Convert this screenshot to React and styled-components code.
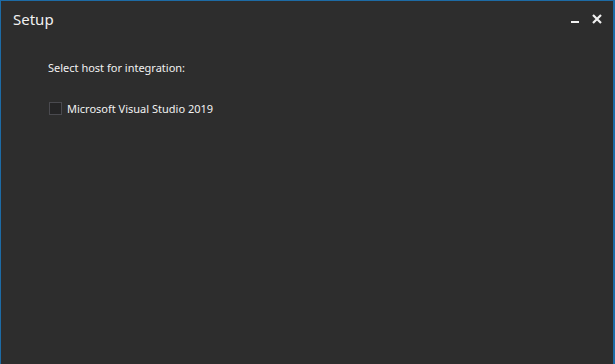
import React from "react";
import styled, { createGlobalStyle } from "styled-components";

const Global = createGlobalStyle`
  html, body { margin: 0; padding: 0; background: #2d2d2d; }
  body { font-family: "Noto Sans", "Open Sans", sans-serif; }
`;

const Window = styled.div`
  box-sizing: border-box;
  width: 615px;
  height: 364px;
  background: #2d2d2d;
  border: 1px solid #1d6ba5;
  border-bottom: none;
  border-right-width: 2px;
  display: flex;
  flex-direction: column;
  color: #f1f1f1;
  overflow: hidden;
`;

const TitleBar = styled.div`
  height: 36px;
  display: flex;
  align-items: center;
  justify-content: space-between;
  padding: 0 9px 0 12px;
`;

const Title = styled.div`
  font-size: 15px;
  color: #f1f1f1;
  margin-top: 0;
`;

const Controls = styled.div`
  display: flex;
  align-items: center;
  gap: 8px;
  margin-top: -1px;
`;

const CtrlButton = styled.div`
  width: 14px;
  height: 14px;
  display: flex;
  align-items: center;
  justify-content: center;
`;

const Body = styled.div`
  padding: 23px 0 0 47px;
  display: flex;
  flex-direction: column;
  gap: 26px;
  font-size: 11px;
`;

const Label = styled.div`
  color: #f1f1f1;
`;

const CheckRow = styled.label`
  display: flex;
  align-items: center;
  gap: 5px;
  padding-left: 1px;
`;

const Box = styled.span`
  box-sizing: border-box;
  width: 13px;
  height: 13px;
  border: 1px solid #4a4a4f;
  background: #252526;
`;

export default function App() {
  return (
    <>
      <Global />
      <Window>
        <TitleBar>
          <Title>Setup</Title>
          <Controls>
            <CtrlButton>
              <svg width="10" height="10" viewBox="0 0 10 10">
                <rect x="1" y="7" width="8" height="2" fill="#f1f1f1" />
              </svg>
            </CtrlButton>
            <CtrlButton>
              <svg width="10" height="10" viewBox="0 0 10 10">
                <path d="M1 1 L9 9 M9 1 L1 9" stroke="#f1f1f1" strokeWidth="2.2" />
              </svg>
            </CtrlButton>
          </Controls>
        </TitleBar>
        <Body>
          <Label>Select host for integration:</Label>
          <CheckRow>
            <Box />
            <span>Microsoft Visual Studio 2019</span>
          </CheckRow>
        </Body>
      </Window>
    </>
  );
}
